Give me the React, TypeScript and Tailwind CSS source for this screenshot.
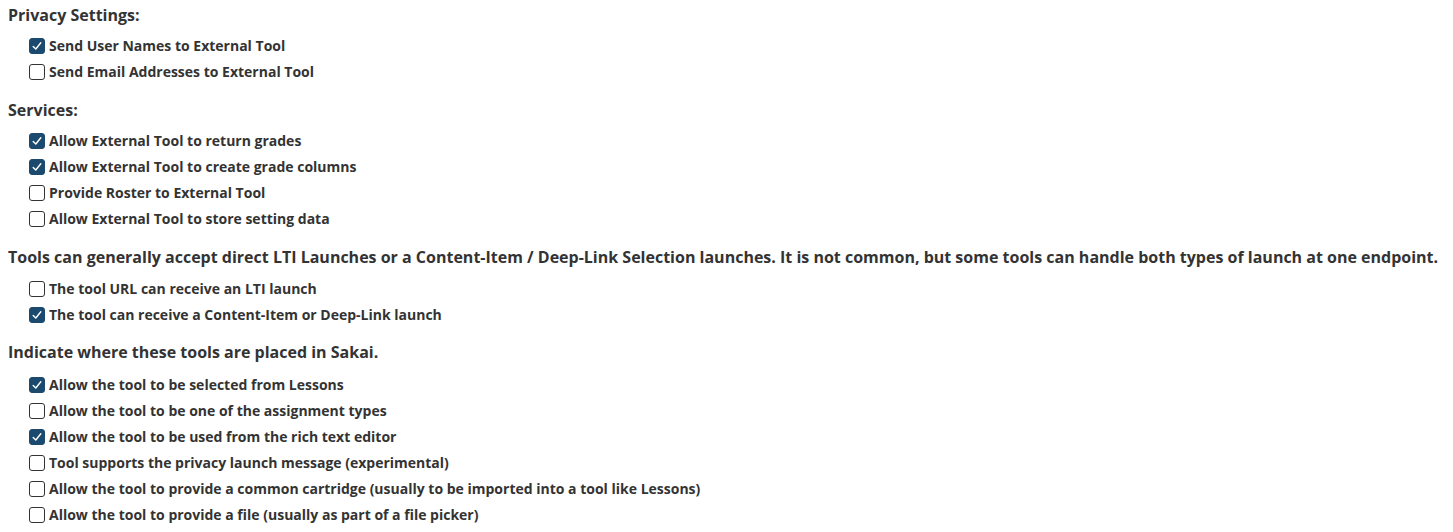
import React, { useState } from 'react';

interface Option {
    id: string;
    label: string;
    checked: boolean;
}
interface Section {
    title: string;
    top: string;
    gap: string;
    options: Option[];
}

const initialSections: Section[] = [
    {
        title: 'Privacy Settings:',
        top: '',
        gap: 'mt-[6px]',
        options: [
            { id: 'sendname', label: 'Send User Names to External Tool', checked: true },
            { id: 'sendemail', label: 'Send Email Addresses to External Tool', checked: false },
        ],
    },
    {
        title: 'Services:',
        top: 'mt-[13px]',
        gap: 'mt-[6px]',
        options: [
            { id: 'outcomes', label: 'Allow External Tool to return grades', checked: true },
            { id: 'lineitems', label: 'Allow External Tool to create grade columns', checked: true },
            { id: 'roster', label: 'Provide Roster to External Tool', checked: false },
            { id: 'settings', label: 'Allow External Tool to store setting data', checked: false },
        ],
    },
    {
        title: 'Tools can generally accept direct LTI Launches or a Content-Item / Deep-Link Selection launches. It is not common, but some tools can handle both types of launch at one endpoint.',
        top: 'mt-[13px]',
        gap: 'mt-[7px]',
        options: [
            { id: 'lti', label: 'The tool URL can receive an LTI launch', checked: false },
            { id: 'deeplink', label: 'The tool can receive a Content-Item or Deep-Link launch', checked: true },
        ],
    },
    {
        title: 'Indicate where these tools are placed in Sakai.',
        top: 'mt-[12px]',
        gap: 'mt-[8px]',
        options: [
            { id: 'lessons', label: 'Allow the tool to be selected from Lessons', checked: true },
            { id: 'assignments', label: 'Allow the tool to be one of the assignment types', checked: false },
            { id: 'editor', label: 'Allow the tool to be used from the rich text editor', checked: true },
            { id: 'privacy', label: 'Tool supports the privacy launch message (experimental)', checked: false },
            { id: 'cartridge', label: 'Allow the tool to provide a common cartridge (usually to be imported into a tool like Lessons)', checked: false },
            { id: 'file', label: 'Allow the tool to provide a file (usually as part of a file picker)', checked: false },
        ],
    },
];

const Checkbox: React.FC<{ checked: boolean; onChange: () => void }> = ({ checked, onChange }) => (
    <button
        type="button"
        onClick={onChange}
        className={`w-4 h-4 rounded-[3px] flex items-center justify-center shrink-0 ${checked ? 'bg-[#1b4a6e] border border-[#1b4a6e]' : 'bg-white border border-[#333]'}`}
    >
        {checked && (
            <svg width="12" height="12" viewBox="0 0 12 12" fill="none">
                <path d="M2.2 6.4 L4.8 9 L9.8 2.8" stroke="white" strokeWidth="1.4" strokeLinecap="round" strokeLinejoin="round" />
            </svg>
        )}
    </button>
);

export default function App() {
    const [sections, setSections] = useState(initialSections);

    const toggle = (si: number, id: string) => {
        setSections(prev => prev.map((s, i) => i !== si ? s : {
            ...s,
            options: s.options.map(o => o.id === id ? { ...o, checked: !o.checked } : o),
        }));
    };

    return (
        <div className="bg-white min-h-screen px-2 pt-[3px] text-[#333]" style={{ fontFamily: '"Open Sans", "Liberation Sans", sans-serif' }}>
            {sections.map((s, si) => (
                <div key={s.title} className={s.top}>
                    <h4 className="text-base font-bold leading-6 whitespace-nowrap">{s.title}</h4>
                    <div className={`${s.gap} pl-[21px]`}>
                        {s.options.map(o => (
                            <label key={o.id} className="flex items-center gap-1 h-[26px] cursor-pointer">
                                <Checkbox checked={o.checked} onChange={() => toggle(si, o.id)} />
                                <span className="text-sm font-bold whitespace-nowrap">{o.label}</span>
                            </label>
                        ))}
                    </div>
                </div>
            ))}
        </div>
    );
}
